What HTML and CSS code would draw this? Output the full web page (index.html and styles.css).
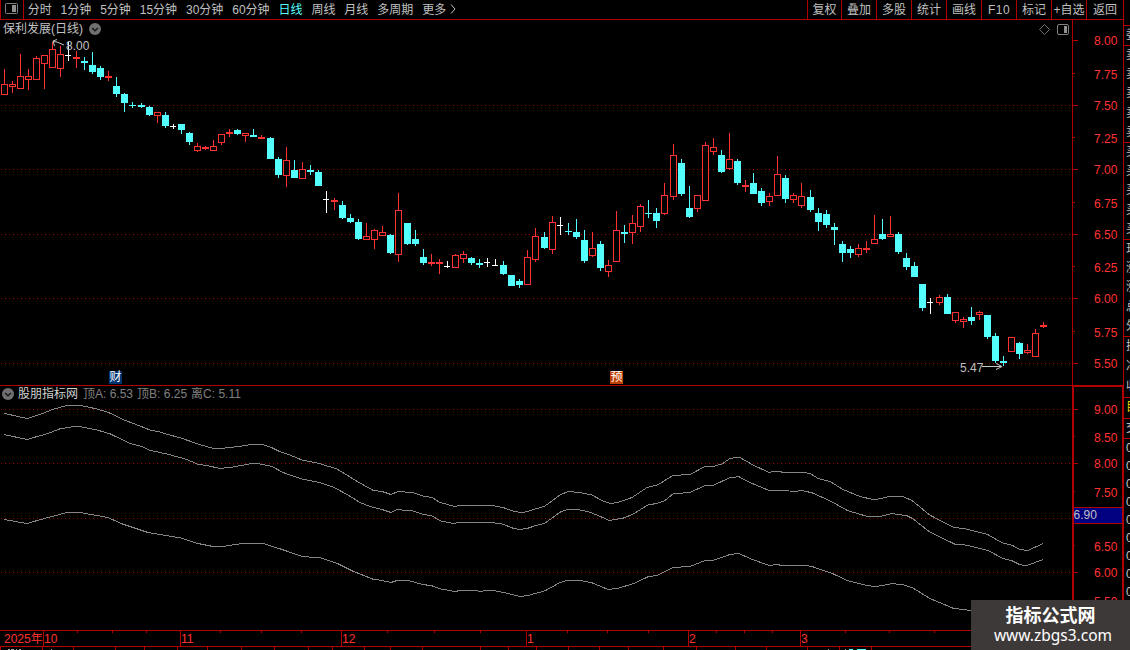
FILE: index.html
```html
<!DOCTYPE html>
<html lang="zh-CN">
<head>
    <meta charset="UTF-8">
    <title>保利发展(日线)</title>
    <link rel="stylesheet" href="styles.css">
</head>
<body>
    <div class="app">
        <div class="main">
            <div class="toolbar">
                <div class="panel-toggle">
                    <svg width="13" height="11" viewBox="0 0 13 11">
                        <rect x="0.5" y="0.5" width="12" height="10" rx="1" class="icon-line"/>
                        <rect x="7" y="2" width="4" height="7" class="icon-fill"/>
                    </svg>
                </div>
                <div class="periods">
                    <span>分时</span>
                    <span>1分钟</span>
                    <span>5分钟</span>
                    <span>15分钟</span>
                    <span>30分钟</span>
                    <span>60分钟</span>
                    <span class="active">日线</span>
                    <span>周线</span>
                    <span>月线</span>
                    <span>多周期</span>
                    <span>更多</span>
                    <svg class="more-arrow" width="6" height="10" viewBox="0 0 6 10"><path d="M1 0.5 L5 5 L1 9.5"/></svg>
                </div>
                <div class="tools">
                    <span class="first">复权</span>
                    <span>叠加</span>
                    <span>多股</span>
                    <span>统计</span>
                    <span>画线</span>
                    <span class="latin">F10</span>
                    <span>标记</span>
                    <span>+自选</span>
                    <span class="last">返回</span>
                </div>
            </div>

            <div class="pane price-pane">
                <svg class="chart" id="priceChart" width="1123" height="366" viewBox="0 20 1123 366">
                    <g class="grid">
                        <path d="M1 105.5H1072M1 169.5H1072M1 234.5H1072M1 298.5H1072M1 363.5H1072"/>
                    </g>
                    <g id="candles"></g>
                    <g class="pointer">
                        <path d="M53 41.5 L57 42 L64 45 M53 41 L57 39.5 M53 41 L54.5 46"/>
                        <path d="M982 366.5 H1002 M996 363.5 L1002 366.5 L996 369.5"/>
                    </g>
                    <text x="66" y="50" class="note">8.00</text>
                    <text x="960" y="372" class="note">5.47</text>
                    <path class="frame" d="M1072.5 20V386M0 385.5H1123"/>
                    <path class="frame" d="M1073 40.5h5M1073 105.5h5M1073 169.5h5M1073 234.5h5M1073 298.5h5M1073 363.5h5"/>
                    <path class="frame" d="M1073 73.5h2M1073 137.5h2M1073 202.5h2M1073 266.5h2M1073 331.5h2"/>
                    <g class="scale" id="priceScale"></g>
                    <path class="diamond" d="M1044.5 24.5 L1049.5 29.5 L1044.5 34.5 L1039.5 29.5 Z"/>
                    <rect x="1057.5" y="24.5" width="11" height="10" rx="1.5" class="icon-line"/>
                    <rect x="1064" y="26" width="3" height="7" class="icon-fill"/>
                </svg>
                <div class="pane-title">
                    <span>保利发展(日线)</span>
                    <svg width="12" height="12" viewBox="0 0 12 12"><circle cx="6" cy="6" r="6" class="dot"/><path class="chevron" d="M3 5 L6 7.7 L9 5"/></svg>
                </div>
                <span class="event report">财</span>
                <span class="event forecast">预</span>
            </div>

            <div class="pane indicator-pane">
                <svg class="chart" width="1123" height="244" viewBox="0 386 1123 244">
                    <g class="grid">
                        <path d="M1 409.5H1072M1 463.5H1072M1 518.5H1072M1 572.5H1072"/>
                    </g>
                    <g class="curves">
                        <polyline points="4,413.3 27,418.5 32,417 43,413.3 52,409.7 67,405.3 80,405.3 97,409 108,412.3 125,420.3 140,426 150,430 160,432 167,434.3 180,437.7 200,444.7 213,448.3 223,448.3 242,446 252,444.3 262,444.3 271,447.3 280,451.7 288,454.3 302,460 320,463.7 337,469 357,481.3 373,490.3 382,491.5 391,494.5 398,491.5 412,492.5 423,496 432,497.5 440,502.5 455,506.5 460,505.5 492,505.5 503,507.5 513,511 522,512.7 530,510.7 545,506 560,495 568,491.5 580,492.5 592,495 602,500.5 610,503.5 618,502.5 632,497.5 647,487.5 658,484.7 673,475.5 690,474.5 705,466.5 713,466.5 722,464 730,458.5 737,457.5 740,457.5 753,465 769,472.5 773,471.5 780,471.5 783,472.5 805,472.5 811,474 818,478.5 830,481.5 843,489.5 860,496.5 873,499.5 880,498.8 890,496.2 902,496.2 912,500.5 930,515.2 953,527.2 967,529.2 987,534.2 1003,543.2 1012,545.2 1020,549.5 1028,550.5 1043,543.5"/>
                        <polyline points="4,434.5 27,439.5 32,438 47,433.8 60,428.8 73,426.6 80,426.6 97,430 110,433.8 130,443.5 142,446.5 150,450.4 167,454 187,459.5 198,464.4 207,465.5 220,468.5 233,467 252,463.5 258,463.5 272,466.5 283,472.5 302,479 320,482.7 333,487 347,494.4 360,502.5 370,506.5 382,509.5 391,512.5 397,509.5 413,511 423,514.4 432,515.8 440,520.8 453,523.5 460,522.5 492,522.5 503,524.2 513,528.2 520,529.5 528,528.2 535,525.8 545,523.2 560,512.2 567,509.5 578,509.5 590,512.2 602,517.2 609,520.5 623,518.2 633,514.2 648,504.8 657,503.5 665,500.5 673,493.8 690,492.5 705,485.5 713,485.5 730,477.5 739,476.8 750,482.5 769,490.5 797,491.2 802,490.5 812,492.8 830,500.8 848,510.8 867,516.3 880,516.5 892,513.5 907,515.8 913,518.8 930,532.2 955,544.2 967,545.2 988,550.5 1003,558.5 1012,560.8 1020,564.8 1027,565.5 1043,559.5"/>
                        <polyline points="4,519.5 27,523.5 32,522 42,519.2 67,512.5 80,512.5 108,517.5 123,524.2 148,532.5 180,537.8 198,543.5 213,546.5 223,546.5 242,543.5 263,543.5 283,549.8 302,556.5 320,557.8 337,563.2 353,571.2 373,579.2 382,580.5 391,582.5 397,580.5 408,580.5 423,584.5 432,585.8 440,588.8 455,591.5 460,590.5 475,590.5 481,591.5 485,590.5 493,590.5 505,592.8 520,596.5 528,595.5 545,590.8 560,582.5 567,580.5 580,580.5 592,582.8 608,589.5 618,588.2 633,583.8 648,576.8 658,575.2 673,567.5 690,566.5 705,560.5 713,560.5 730,554.5 739,553.5 750,558.5 769,565.5 777,564.5 782,565.5 805,565.5 812,566.5 833,573.8 848,580.8 867,585.5 875,586.5 883,585.5 892,583.5 903,584.8 912,587.5 930,598.5 953,608.2 971,610.5"/>
                    </g>
                    <path class="frame" d="M1073 386.5H1123M1073.5 386V630M1072.5 386V630"/>
                    <path class="frame" d="M1122.5 386V630"/>
                    <path class="frame" d="M1074 409.5h4M1074 463.5h4M1074 572.5h4M1074 436.5h1M1074 491.5h1M1074 545.5h1"/>
                    <g class="scale" id="indicatorScale"></g>
                    <rect x="1074" y="508" width="48" height="15" class="cursor-box"/>
                    <path class="frame" d="M1074 507.5H1122M1074 523.5H1122"/>
                    <text x="1073.5" y="519" class="note">6.90</text>
                </svg>
                <div class="pane-title">
                    <svg width="12" height="12" viewBox="0 0 12 12"><circle cx="6" cy="6" r="6" class="dot"/><path class="chevron" d="M3 5 L6 7.7 L9 5"/></svg>
                    <span class="name">股朋指标网</span>
                    <span class="value">顶A: 6.53</span>
                    <span class="value">顶B: 6.25</span>
                    <span class="value">离C: 5.11</span>
                </div>
            </div>

            <svg class="timeline" width="1123" height="20" viewBox="0 630 1123 20">
                <path class="frame" d="M0 630.5H1123M0 646.5H1123"/>
                <path class="frame" id="timeTicks"/>
                <g class="scale" id="months"></g>
                <path class="tab-text" d="M8 649.5h2M11 649.5h3M16 649.5h1M19 649.5h2M51 649.5h1M828 649.5h1M845 649.5h1"/>
                <path class="tab-text on" d="M849 649.5h4M857 649.5h9"/>
            </svg>
        </div>

        <div class="quotes">
            <div class="quote-group title"><span>委</span></div>
            <div class="quote-group"><span>卖</span><span>卖</span><span>卖</span><span>卖</span><span>卖</span></div>
            <div class="quote-group"><span>买</span><span>买</span><span>买</span><span>买</span><span>买</span></div>
            <div class="quote-group"><span>现</span><span>涨</span><span>涨</span><span>总</span><span>外</span></div>
            <div class="quote-group short"><span>换</span><span>净</span><span>收</span></div>
            <div class="quote-group single yellow"><span>目</span></div>
            <div class="quote-group single"><span>交</span></div>
            <div class="deals"><span>0</span><span>0</span><span>0</span><span>0</span><span>0</span><span>0</span><span>0</span><span>0</span><span>0</span></div>
        </div>
    </div>

    <div class="watermark">
        <div class="site-name">指标公式网</div>
        <div class="site-url">www.zbgs3.com</div>
    </div>

    <script src="chart.js"></script>
</body>
</html>
```
FILE: styles.css
```css
body {
    margin: 0;
    width: 1130px;
    height: 650px;
    overflow: hidden;
    background: #000;
    color: #c0c0c0;
    font-family: "Liberation Sans", "Noto Sans CJK SC", sans-serif;
    font-size: 12px;
    position: relative;
}

.app {
    display: flex;
    height: 650px;
}

.main {
    width: 1123px;
    display: flex;
    flex-direction: column;
}

svg {
    display: block;
}

/* toolbar */
.toolbar {
    display: flex;
    height: 20px;
    box-sizing: border-box;
    border-bottom: 1px solid #b00000;
    line-height: 20px;
    white-space: nowrap;
}

.panel-toggle {
    box-sizing: border-box;
    width: 24px;
    padding: 3px 0 0 4px;
    border-left: 1px solid #b00000;
    border-right: 1px solid #b00000;
}

.periods {
    display: flex;
    gap: 8.9px;
    padding-left: 3.7px;
    flex: 1;
}

.periods .active {
    color: #54ffff;
}

.more-arrow {
    margin: 4px 0 0 -5px;
}

.more-arrow path {
    fill: none;
    stroke: #c0c0c0;
}

.tools {
    display: flex;
}

.tools span {
    box-sizing: border-box;
    width: 35px;
    height: 19px;
    border-left: 1px solid #b00000;
    text-align: center;
}

.tools .latin {
    letter-spacing: 0.5px;
}

.tools .first {
    width: 34px;
}

.tools .last {
    width: 37px;
}

/* panes */
.pane {
    position: relative;
}

.price-pane {
    height: 366px;
}

.indicator-pane {
    height: 244px;
}

.pane-title {
    position: absolute;
    left: 3px;
    top: 0;
    display: flex;
    align-items: center;
    gap: 6px;
    height: 18px;
    line-height: 18px;
    white-space: nowrap;
}

.pane-title span {
    height: 18px;
}

.indicator-pane .pane-title {
    left: 2px;
    top: -1px;
    gap: 4px;
}

.pane-title .name {
    color: #d0d0d0;
    margin-right: 1px;
}

.pane-title .value {
    color: #808080;
}

.dot {
    fill: #707070;
}

.chevron {
    fill: none;
    stroke: #181818;
    stroke-width: 1.5;
}

.event {
    position: absolute;
    top: 351px;
    width: 13px;
    height: 13px;
    line-height: 13px;
    text-align: center;
    color: #fff;
}

.report {
    left: 109px;
    background: #003470;
}

.forecast {
    left: 610px;
    background: #c04000;
}

/* chart drawing */
.frame {
    fill: none;
    stroke: #b00000;
    shape-rendering: crispEdges;
}

.grid path {
    stroke: #a00000;
    stroke-dasharray: 1 3;
    shape-rendering: crispEdges;
}

.curves polyline {
    fill: none;
    stroke: #868686;
    shape-rendering: crispEdges;
}

.scale text {
    fill: #ff3232;
    font-size: 12px;
}

.note {
    fill: #c0c0c0;
    font-size: 12px;
}

.pointer path {
    fill: none;
    stroke: #c8c8c8;
}

.cursor-box {
    fill: #000080;
}

.diamond {
    fill: none;
    stroke: #707070;
}

.icon-line {
    fill: none;
    stroke: #808080;
}

.icon-fill {
    fill: #909090;
}

#candles {
    shape-rendering: crispEdges;
}

.up {
    fill: #ff3232;
}

.up-body {
    fill: #000;
    stroke: #ff3232;
}

.down {
    fill: #54ffff;
}

.flat {
    fill: #fff;
}

.tab-text {
    stroke: #a0a0a0;
}

.tab-text.on {
    stroke: #54ffff;
}

/* quote column cut off by the window edge */
.quotes {
    width: 7px;
    box-sizing: border-box;
    border-left: 1px solid #b00000;
    padding-top: 25px;
    overflow: hidden;
}

.quote-group {
    box-sizing: border-box;
    height: 97px;
    border-top: 1px solid #b00000;
    padding-left: 2px;
    display: flex;
    flex-direction: column;
}

.quote-group span {
    flex: 1;
    width: 12px;
    line-height: 19px;
}

.quote-group.title {
    height: 20px;
}

.quote-group.short {
    height: 61px;
}

.quote-group.single {
    height: 20px;
}

.quote-group.yellow {
    color: #e0d000;
    height: 21px;
}

.deals {
    border-top: 1px solid #b00000;
    padding-left: 2px;
    display: flex;
    flex-direction: column;
}

.deals span {
    height: 18px;
    line-height: 18px;
}

.watermark {
    position: absolute;
    left: 971px;
    top: 600px;
    width: 159px;
    height: 50px;
    background: #3e3939;
    color: #fff;
    text-align: center;
    white-space: nowrap;
}

.site-name {
    font: bold 18px/20px "Noto Sans CJK SC", sans-serif;
    padding-top: 4px;
}

.site-url {
    font: 15.5px/23px "Noto Sans", sans-serif;
    margin-left: 5px;
}
```
FILE: chart.js
```js
var SVG = 'http://www.w3.org/2000/svg';

function add(parent, tag, attrs, text) {
    var el = document.createElementNS(SVG, tag);
    for (var key in attrs) el.setAttribute(key, attrs[key]);
    if (text) el.textContent = text;
    parent.appendChild(el);
}

// x, high, body top, body bottom, low, kind (r = up, c = down, w = flat)
var candles = [
    [4,69,84,95,95,'r'],[12,81,84,87,93,'r'],[20,54,76,89,89,'r'],[28,69,76,80,90,'r'],[36,56,58,80,80,'r'],
    [44,55,55,64,89,'r'],[52,42,49,68,68,'r'],[60,46,54,69,77,'r'],[68,42,55,56,61,'w'],[76,51,57,59,68,'r'],
    [84,57,61,63,70,'c'],[92,52,65,72,74,'c'],[100,66,68,77,80,'c'],[108,71,76,78,81,'r'],[116,77,86,94,97,'c'],
    [124,93,94,103,112,'c'],[132,102,105,106,108,'c'],[141,103,105,107,108,'c'],[149,106,107,115,116,'c'],[157,112,112,116,123,'r'],
    [165,112,115,126,128,'c'],[173,124,126,127,129,'w'],[181,124,124,130,134,'c'],[189,132,133,142,145,'c'],[197,143,146,151,152,'r'],
    [205,146,147,149,150,'r'],[213,140,146,151,151,'r'],[221,134,134,143,145,'r'],[229,129,132,134,137,'r'],[237,129,130,134,135,'c'],
    [245,133,133,136,142,'r'],[253,129,135,137,137,'c'],[261,135,137,139,139,'r'],[270,137,138,159,159,'c'],[278,157,159,175,178,'c'],
    [286,147,160,176,187,'r'],[294,160,170,178,178,'c'],[302,162,169,179,179,'r'],[310,165,170,172,175,'c'],[318,170,172,186,186,'c'],
    [326,191,199,200,213,'w'],[334,198,200,202,210,'r'],[342,201,205,218,219,'c'],[350,214,218,222,223,'c'],[358,219,222,239,240,'c'],
    [366,223,236,240,240,'r'],[374,229,230,240,249,'r'],[382,226,232,236,236,'r'],[390,234,235,253,254,'c'],[398,193,210,255,262,'r'],
    [407,223,223,244,245,'c'],[415,230,239,244,246,'c'],[423,249,257,263,265,'c'],[431,254,262,264,266,'r'],[439,259,262,264,274,'r'],
    [447,261,266,267,268,'w'],[455,254,255,268,268,'r'],[463,251,254,259,263,'r'],[471,257,258,263,265,'c'],[479,259,263,265,268,'c'],
    [487,258,262,263,267,'w'],[495,259,265,266,266,'w'],[503,261,265,274,275,'c'],[511,275,275,286,286,'c'],[519,279,281,285,288,'c'],
    [527,250,257,285,285,'r'],[535,228,236,260,262,'r'],[544,232,237,248,249,'c'],[552,216,222,250,254,'r'],[560,217,225,226,235,'w'],
    [568,223,231,232,235,'c'],[576,219,232,237,239,'c'],[584,230,240,261,263,'c'],[592,232,248,256,257,'r'],[600,241,244,268,271,'c'],
    [608,260,265,272,277,'r'],[616,211,230,262,262,'r'],[624,225,232,234,243,'c'],[632,215,223,233,244,'r'],[640,204,206,227,232,'r'],
    [648,200,213,214,218,'c'],[656,208,213,221,228,'c'],[664,183,195,214,215,'r'],[673,144,155,197,200,'r'],[681,159,163,194,196,'c'],
    [689,186,208,217,218,'c'],[697,195,195,209,212,'r'],[705,142,145,201,201,'r'],[713,138,147,152,155,'r'],[721,150,155,172,173,'c'],
    [729,133,159,169,170,'r'],[737,159,161,183,185,'c'],[745,180,185,187,192,'r'],[753,173,183,194,194,'c'],[761,188,191,203,206,'c'],
    [769,193,196,202,206,'r'],[777,156,174,196,196,'r'],[785,175,178,199,203,'c'],[793,193,195,200,203,'r'],[801,183,196,206,208,'r'],
    [810,190,197,210,212,'c'],[818,208,213,222,231,'c'],[826,210,214,225,228,'c'],[834,223,227,230,245,'c'],[842,241,244,253,262,'c'],
    [850,246,249,253,258,'c'],[858,244,248,255,257,'r'],[866,241,248,250,253,'r'],[874,215,239,244,244,'r'],[882,219,234,239,240,'c'],
    [890,216,234,237,237,'r'],[898,232,234,252,254,'c'],[906,253,258,267,270,'c'],[914,262,266,277,277,'c'],[922,284,284,308,311,'c'],
    [930,298,302,303,314,'w'],[939,295,297,303,305,'r'],[947,294,297,314,314,'c'],[955,312,312,321,323,'r'],[963,317,319,322,328,'r'],
    [971,307,317,321,325,'c'],[979,311,312,315,320,'r'],[987,315,315,337,339,'c'],[995,333,336,361,363,'c'],[1003,356,361,363,366,'c'],
    [1011,337,337,352,352,'r'],[1019,342,343,354,359,'c'],[1027,344,350,353,354,'r'],[1035,329,333,357,357,'r'],[1043,322,325,327,328,'r']
];

var names = { r: 'up', c: 'down', w: 'flat' };
var layer = document.getElementById('candles');

candles.forEach(function (c) {
    var x = c[0], top = c[2], bottom = c[3];
    add(layer, 'rect', { x: x, y: c[1], width: 1, height: c[4] - c[1], 'class': names[c[5]] });
    if (c[5] === 'r') {
        add(layer, 'rect', { x: x - 2.5, y: top + 0.5, width: 6, height: bottom - top - 1, 'class': 'up-body' });
    } else if (c[5] === 'c') {
        add(layer, 'rect', { x: x - 3, y: top, width: 7, height: bottom - top, 'class': 'down' });
    } else {
        add(layer, 'rect', { x: x - 3, y: top, width: 6, height: 1, 'class': 'flat' });
    }
});

function drawScale(id, labels) {
    labels.forEach(function (l) {
        add(document.getElementById(id), 'text', { x: 1094, y: l[1] }, l[0]);
    });
}

drawScale('priceScale', [
    ['8.00', 45], ['7.75', 79], ['7.50', 110], ['7.25', 143], ['7.00', 174], ['6.75', 208],
    ['6.50', 239], ['6.25', 272], ['6.00', 303], ['5.75', 337], ['5.50', 368]
]);
drawScale('indicatorScale', [
    ['9.00', 414], ['8.50', 442], ['8.00', 468], ['7.50', 497], ['6.50', 551], ['6.00', 577], ['5.50', 606]
]);

// month marks, small week ticks and the tab edges under the time axis
var months = [[43, '10'], [180, '11'], [341, '12'], [526, '1'], [688, '2'], [800, '3']];
var weeks = [77, 112, 146, 220, 261, 301, 387, 434, 480, 567, 607, 648, 716, 744, 772, 845, 889, 934];
var tabs = [0, 42, 73, 115, 144, 177, 207, 241, 274, 308, 332, 364, 390, 422, 480, 508, 536, 568, 599, 628, 663, 696, 735, 766, 807, 839, 871];
var d = '';

add(document.getElementById('months'), 'text', { x: 4, y: 643 }, '2025年');
months.forEach(function (m) {
    d += 'M' + (m[0] + 0.5) + ' 631v15';
    add(document.getElementById('months'), 'text', { x: m[0] + 1, y: 643 }, m[1]);
});
weeks.forEach(function (x) { d += 'M' + (x + 0.5) + ' 631v2'; });
tabs.forEach(function (x) { d += 'M' + (x + 0.5) + ' 647v3'; });
document.getElementById('timeTicks').setAttribute('d', d);
```
